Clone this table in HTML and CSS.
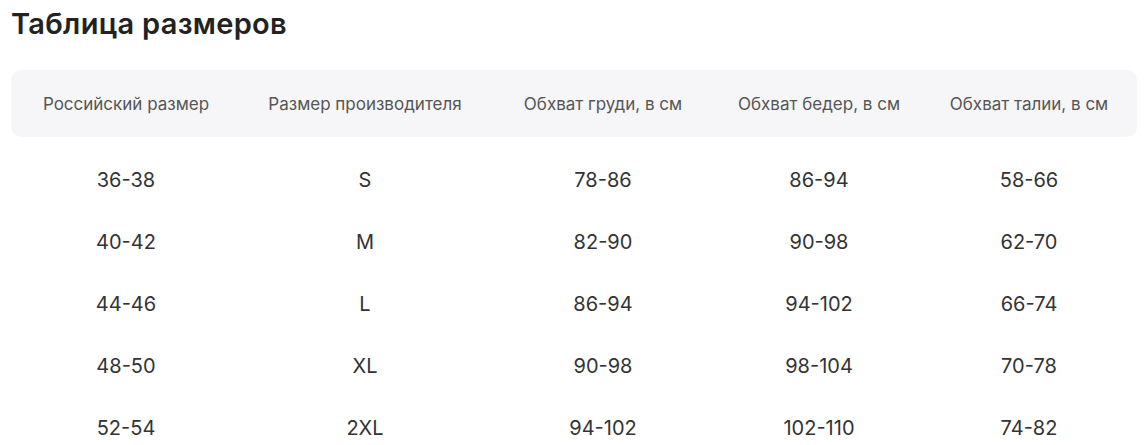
FILE: index.html
```html
<!DOCTYPE html>
<html lang="ru">
<head>
<meta charset="utf-8">
<link rel="stylesheet" href="styles.css">
</head>
<body>
<div class="page">
  <h1 class="title">Таблица размеров</h1>
  <div class="table">
    <div class="row head">
      <div class="cell">Российский размер</div>
      <div class="cell">Размер производителя</div>
      <div class="cell">Обхват груди, в см</div>
      <div class="cell">Обхват бедер, в см</div>
      <div class="cell">Обхват талии, в см</div>
    </div>
    <div class="row">
      <div class="cell">36-38</div><div class="cell">S</div><div class="cell">78-86</div><div class="cell">86-94</div><div class="cell">58-66</div>
    </div>
    <div class="row">
      <div class="cell">40-42</div><div class="cell">M</div><div class="cell">82-90</div><div class="cell">90-98</div><div class="cell">62-70</div>
    </div>
    <div class="row">
      <div class="cell">44-46</div><div class="cell">L</div><div class="cell">86-94</div><div class="cell">94-102</div><div class="cell">66-74</div>
    </div>
    <div class="row">
      <div class="cell">48-50</div><div class="cell">XL</div><div class="cell">90-98</div><div class="cell">98-104</div><div class="cell">70-78</div>
    </div>
    <div class="row">
      <div class="cell">52-54</div><div class="cell">2XL</div><div class="cell">94-102</div><div class="cell">102-110</div><div class="cell">74-82</div>
    </div>
  </div>
</div>
</body>
</html>
```
FILE: styles.css
```css
html, body {
  margin: 0;
  padding: 0;
  background: #ffffff;
}
body {
  font-family: "Inter", "Noto Sans", sans-serif;
  color: #333333;
}
.page {
  padding: 0 11px;
}
.title {
  margin: 0;
  padding-top: 6px;
  height: 70px;
  box-sizing: border-box;
  font-size: 29px;
  font-weight: 600;
  color: #222222;
  line-height: 36px;
  letter-spacing: 0.3px;
}
.table {
  display: flex;
  flex-direction: column;
}
.row {
  display: grid;
  grid-template-columns: 230px 248px 228px 204px 216px;
  height: 62px;
  align-items: center;
  font-size: 20px;
  color: #333333;
}
.row.head {
  height: 67px;
  background: #f6f6f8;
  border-radius: 10px;
  font-size: 17px;
  color: #555555;
  margin-bottom: 12px;
}
.cell {
  text-align: center;
  white-space: nowrap;
}
```
